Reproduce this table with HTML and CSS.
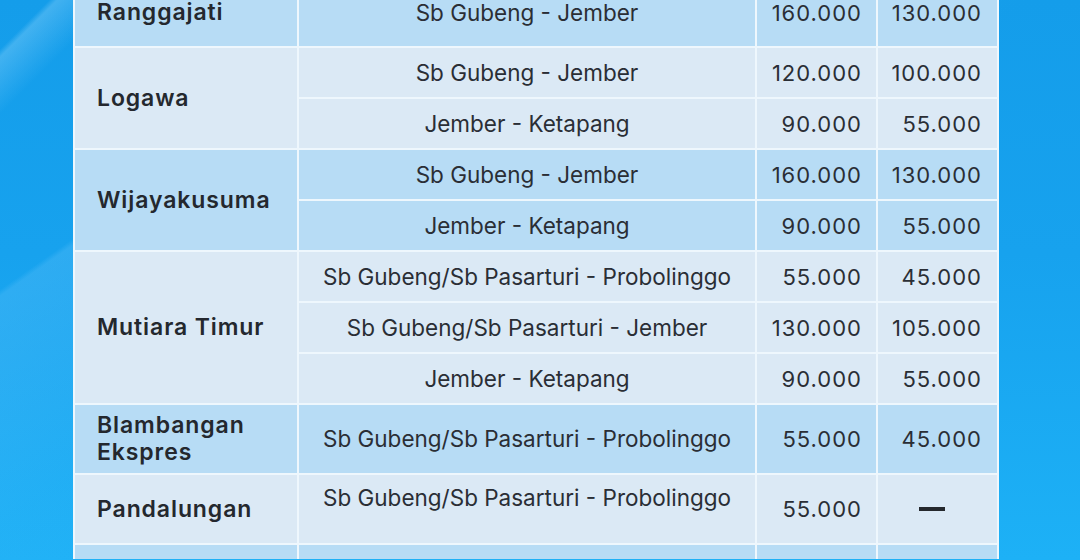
FILE: index.html
```html
<!DOCTYPE html>
<html>
<head>
<meta charset="utf-8">
<link rel="stylesheet" href="styles.css">
</head>
<body>
<div class="page">
  <table class="fares">
    <colgroup>
      <col class="c-name"><col class="c-route"><col class="c-price"><col class="c-price2">
    </colgroup>
    <tbody class="grp dark first">
      <tr><td class="name">Ranggajati</td><td class="route">Sb Gubeng - Jember</td><td class="p1">160.000</td><td class="p2">130.000</td></tr>
    </tbody>
    <tbody class="grp light">
      <tr><td class="name" rowspan="2">Logawa</td><td class="route">Sb Gubeng - Jember</td><td class="p1">120.000</td><td class="p2">100.000</td></tr>
      <tr><td class="route">Jember - Ketapang</td><td class="p1">90.000</td><td class="p2">55.000</td></tr>
    </tbody>
    <tbody class="grp dark">
      <tr><td class="name" rowspan="2">Wijayakusuma</td><td class="route">Sb Gubeng - Jember</td><td class="p1">160.000</td><td class="p2">130.000</td></tr>
      <tr><td class="route">Jember - Ketapang</td><td class="p1">90.000</td><td class="p2">55.000</td></tr>
    </tbody>
    <tbody class="grp light">
      <tr><td class="name" rowspan="3">Mutiara Timur</td><td class="route">Sb Gubeng/Sb Pasarturi - Probolinggo</td><td class="p1">55.000</td><td class="p2">45.000</td></tr>
      <tr><td class="route">Sb Gubeng/Sb Pasarturi - Jember</td><td class="p1">130.000</td><td class="p2">105.000</td></tr>
      <tr><td class="route">Jember - Ketapang</td><td class="p1">90.000</td><td class="p2">55.000</td></tr>
    </tbody>
    <tbody class="grp dark tall">
      <tr><td class="name">Blambangan<br>Ekspres</td><td class="route">Sb Gubeng/Sb Pasarturi - Probolinggo</td><td class="p1">55.000</td><td class="p2">45.000</td></tr>
    </tbody>
    <tbody class="grp light tall">
      <tr><td class="name">Pandalungan</td><td class="route top">Sb Gubeng/Sb Pasarturi - Probolinggo</td><td class="p1">55.000</td><td class="p2"><span class="dash"></span></td></tr>
    </tbody>
    <tbody class="grp dark last">
      <tr><td class="name"></td><td class="route"></td><td class="p1"></td><td class="p2"></td></tr>
    </tbody>
  </table>
</div>
</body>
</html>
```

FILE: styles.css
```css
html, body {
  margin: 0;
  padding: 0;
}
body {
  width: 1080px;
  height: 560px;
  overflow: hidden;
  background:
    linear-gradient(135deg, rgba(255,255,255,0) 0%, rgba(255,255,255,0) 3%, rgba(150,215,252,0.35) 3.5%, rgba(255,255,255,0) 7%, rgba(255,255,255,0) 100%),
    linear-gradient(145deg, rgba(255,255,255,0) 0%, rgba(255,255,255,0) 22%, rgba(90,190,248,0.35) 22.5%, rgba(90,190,248,0.1) 40%, rgba(255,255,255,0) 55%),
    linear-gradient(180deg, #149dea 0%, #17a2ee 45%, #1db1f6 100%);
  font-family: Inter, "Liberation Sans", sans-serif;
  color: #272b31;
}
.page {
  padding-left: 73px;
}
.fares {
  border-collapse: collapse;
  table-layout: fixed;
  width: 924px;
}
.c-name { width: 224px; }
.c-route { width: 458px; }
.c-price { width: 121px; }
.c-price2 { width: 121px; }
.fares td {
  border: 2px solid #eef7fd;
  padding: 0;
  height: 49px;
  vertical-align: middle;
}
.first td { border-top: 0; vertical-align: top; height: 46px; }
.grp.dark td { background: #b7dcf5; }
.grp.light td { background: #dbe9f5; }
.tall td { height: 68px; }
.last td { height: 14px; border-bottom: 0; }
.name {
  font-family: Inter, "Open Sans", sans-serif;
  font-weight: 600;
  font-size: 23px;
  letter-spacing: 0.9px;
  line-height: 27px;
  padding-left: 22px !important;
  color: #24282e;
}
.route {
  text-align: center;
  font-size: 22.5px;
  line-height: 26px;
  color: #2a2e35;
}
.tall .route.top { vertical-align: top; padding-top: 10px; height: 58px; }
.p1, .p2 {
  font-size: 22px;
  letter-spacing: 1px;
  line-height: 26px;
  color: #2a2e35;
}
.p1 { text-align: right; padding-right: 14px !important; }
.p2 { text-align: right; padding-right: 15px !important; }
.first .name { line-height: 25px; }
.dash {
  display: block;
  width: 26px;
  height: 4px;
  background: #25282d;
  margin: 0 auto;
  position: relative;
  left: 2px;
}
```
